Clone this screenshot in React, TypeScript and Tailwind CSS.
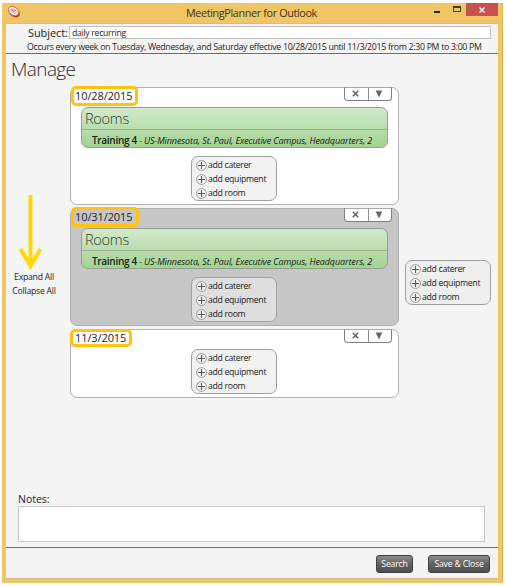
import React from "react";

function PlusIcon() {
  return (
    <svg width="11" height="11" viewBox="0 0 11 11" className="shrink-0" fill="none">
      <circle cx="5.5" cy="5.5" r="4.9" fill="#f8f8f8" stroke="#8a8a8a" strokeWidth="0.9" />
      <path d="M5.5 2v7M2 5.5h7" stroke="#606060" strokeWidth="1.2" />
    </svg>
  );
}

function AddMenu({ className = "" }: { className?: string }) {
  return (
    <div
      className={`flex h-[45px] w-[86px] flex-col rounded-[7px] border border-[#a0a0a0] pt-[1px] pl-[4px] text-[8.7px] text-[#1c1c1c] ${className}`}
    >
      {["add caterer", "add equipment", "add room"].map((label) => (
        <div key={label} className="flex h-[14.2px] shrink-0 items-center gap-[1px]">
          <PlusIcon />
          <span className="leading-[14px] tracking-[-0.3px]">{label}</span>
        </div>
      ))}
    </div>
  );
}

function CardTabs() {
  return (
    <div className="mt-[-1px] mr-[6px] flex h-[14px] w-[48px] rounded-b-[4px] border border-t-[#a8a8a8] border-[#808080] bg-white">
      <div className="flex flex-1 items-center justify-center border-r border-[#909090] pb-[1px]">
        <svg width="7" height="7" viewBox="0 0 7 7" className="mr-[2px]">
          <path d="M.8.8l5.4 5.4M6.2.8L.8 6.2" stroke="#606060" strokeWidth="1.5" />
        </svg>
      </div>
      <div className="flex flex-1 items-center justify-center pb-[1px]">
        <svg width="8" height="8" viewBox="0 0 8 8" className="mr-[2px]">
          <path d="M.7.5h6.6L4 7.5z" fill="#666" />
        </svg>
      </div>
    </div>
  );
}

function Rooms() {
  return (
    <div className="mt-[3px] ml-[10px] h-[41px] w-[307px] rounded-[7px] border border-[#92a08e] bg-linear-to-b from-[#d2e9cc] to-[#a3d292]">
      <div className="h-[22px] border-b border-[#9aae94] pl-[3px] text-[14.5px] leading-[22px] font-light tracking-[-0.25px] text-[#2c3c28]">
        Rooms
      </div>
      <div className="flex items-baseline pl-[10px] whitespace-pre text-[#152010]">
        <span className="text-[10px] leading-[20px] font-semibold tracking-[-0.3px]">Training 4</span>
        <span className="text-[9px] leading-[20px] font-medium tracking-[-0.11px] italic"> - US-Minnesota, St. Paul, Executive Campus, Headquarters, 2</span>
      </div>
    </div>
  );
}

type CardProps = { date: string; rooms?: boolean; selected?: boolean; mark: string };

function Card({ date, rooms, selected, mark }: CardProps) {
  return (
    <section
      className={`relative w-[329px] rounded-[7px] border border-[#b0b0b0] ${rooms ? "h-[118px]" : "h-[69px]"} ${selected ? "bg-[#c6c6c6]" : "bg-white"}`}
    >
      <div className="flex h-[16px] items-start justify-between">
        <h2 className="pl-[4px] text-[11px] leading-[16px] tracking-[-0.1px] text-[#222]">{date}</h2>
        <CardTabs />
      </div>
      {rooms && <Rooms />}
      <AddMenu className={`ml-[120px] ${rooms ? "mt-[8px]" : "mt-[3px]"} ${selected ? "bg-[#dedede]" : "bg-[#f1f1f1]"}`} />
      <span className={`absolute rounded-[5px] border-[3.5px] border-[#ffc20e] ${mark}`} />
    </section>
  );
}

function ActionButton({ children, className }: { children: React.ReactNode; className: string }) {
  return (
    <button
      className={`h-[18px] rounded-[3px] border border-[#3e3e3e] bg-linear-to-b from-[#8c8c8c] via-[#626262] to-[#505050] text-[8.7px] leading-[16px] tracking-[-0.2px] whitespace-nowrap text-white ${className}`}
    >
      {children}
    </button>
  );
}

export default function App() {
  return (
    <div className="h-[586px] w-[506px] bg-white pt-[3px] pl-[2px] font-['Open_Sans','Noto_Sans',sans-serif]">
      <div className="h-[580px] w-[501px] border-r border-[#dfb44f] bg-[#f0c566] pl-[4px]">
        <header className="flex h-[20px] w-[496px] items-start">
          <svg width="14" height="14" viewBox="0 0 14 14" className="mt-[2px] ml-[1px] shrink-0">
            <ellipse cx="7.2" cy="7.6" rx="6.1" ry="4.3" transform="rotate(35 7.2 7.6)" fill="#b93a26" />
            <ellipse cx="6.6" cy="6.1" rx="5.6" ry="4" transform="rotate(35 6.6 6.1)" fill="#fff" stroke="#d65a44" strokeWidth="0.9" />
            <ellipse cx="6.6" cy="6.1" rx="3" ry="1.9" transform="rotate(35 6.6 6.1)" fill="#f3e4df" stroke="#d88a78" strokeWidth="0.7" />
            <path d="M6.6 6.1L4.4 4.4M6.6 6.1l1.9-.6" stroke="#b93a26" strokeWidth="0.8" />
          </svg>
          <h1 className="ml-[165px] w-[140px] text-[10.8px] leading-[19px] tracking-[-0.36px] whitespace-nowrap text-[#3c3218]">
            MeetingPlanner for Outlook
          </h1>
          <span className="mt-[8px] ml-[108px] h-[2px] w-[6px] bg-[#2e2818]" />
          <span className="mt-[3px] ml-[13px] h-[6px] w-[8px] border border-t-2 border-[#453b20]" />
          <span className="ml-[5px] flex h-[13px] w-[32px] items-center justify-center bg-[#c75050]">
            <svg width="6" height="6" viewBox="0 0 6 6">
              <path d="M.5.5l5 5M5.5.5l-5 5" stroke="#fff" strokeWidth="1.3" />
            </svg>
          </span>
        </header>

        <main className="h-[556px] w-[492px] border-t border-b border-[#d0bd8a] bg-[#f4f4f4]">
          <div className="h-[30px] border-b border-[#6e6e6e]">
            <div className="flex h-[15px] items-start pt-[2px]">
              <label className="w-[63px] pl-[22px] text-[11px] leading-[13px] tracking-[-0.1px] whitespace-nowrap text-[#222]">Subject:</label>
              <div className="h-[13px] w-[422px] border border-[#c0c0c0] bg-white pl-[2px] text-[8.7px] leading-[12px] tracking-[-0.3px] text-[#1c1c1c]">
                daily recurring
              </div>
            </div>
            <p className="pl-[21px] text-[8.8px] leading-[16px] tracking-[-0.32px] whitespace-nowrap text-[#1c1c1c]">
              Occurs every week on Tuesday, Wednesday, and Saturday effective 10/28/2015 until 11/3/2015 from 2:30 PM to 3:00 PM
            </p>
          </div>
          <div className="h-[33px] pl-[5px] text-[19px] leading-[31px] font-light tracking-[-0.6px] text-[#2a2a2a]">Manage</div>

          <div className="flex h-[405px]">
            <aside className="w-[64px] pt-[108px]">
              <svg width="26" height="77" viewBox="0 0 26 77" className="ml-[12px]" fill="none" stroke="#ffd800">
                <path d="M12.5 0v68" strokeWidth="4" />
                <path d="M2.5 54l10 17 10-17" strokeWidth="4" />
              </svg>
              <div className="mt-[-2px] text-center text-[8.7px] leading-[14.4px] tracking-[-0.25px] whitespace-nowrap text-[#1c1c1c]">
                <div className="pr-[8px]">Expand All</div>
                <div className="pr-[8px]">Collapse All</div>
              </div>
            </aside>
            <div className="flex w-[329px] flex-col gap-[3px]">
              <Card date="10/28/2015" rooms mark="left-[0px] top-[-2px] h-[20px] w-[67px]" />
              <Card date="10/31/2015" rooms selected mark="left-[0px] top-[-2px] h-[20px] w-[68px]" />
              <Card date="11/3/2015" mark="left-[-1px] top-[-1px] h-[18px] w-[62px]" />
            </div>
            <AddMenu className="mt-[173px] ml-[6px] bg-[#eeeeee]" />
          </div>

          <div className="h-[56px] border-b border-[#6e6e6e] pl-[12px]">
            <label className="block h-[14px] text-[10.5px] leading-[15px] text-[#222]">Notes:</label>
            <div className="h-[36px] w-[467px] border border-[#c4c4c4] bg-white" />
          </div>
          <footer className="flex gap-[15px] pt-[7px] pl-[370px]">
            <ActionButton className="w-[37px]">Search</ActionButton>
            <ActionButton className="w-[62px]">Save &amp; Close</ActionButton>
          </footer>
        </main>
      </div>
    </div>
  );
}
